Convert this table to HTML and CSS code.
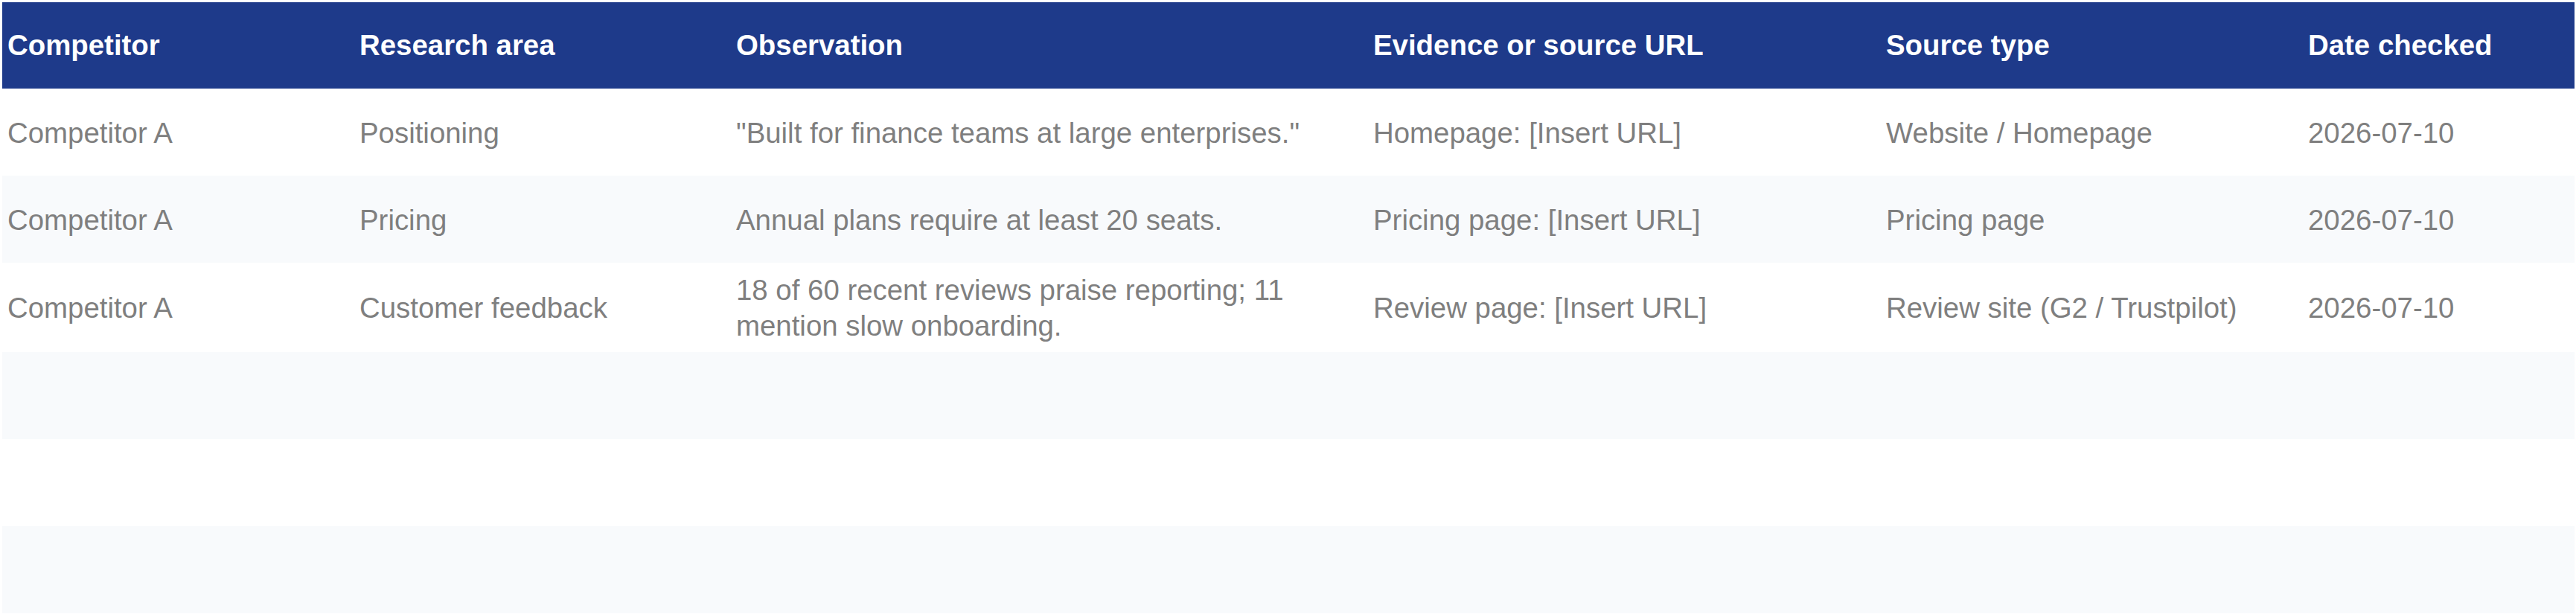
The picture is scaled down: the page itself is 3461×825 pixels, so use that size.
FILE: index.html
```html
<!DOCTYPE html>
<html lang="en">
<head>
<meta charset="utf-8">
<title>Competitor research log</title>
<link rel="stylesheet" href="styles.css">
</head>
<body>
<table class="log">
  <colgroup>
    <col class="c-competitor">
    <col class="c-area">
    <col class="c-obs">
    <col class="c-evidence">
    <col class="c-type">
    <col class="c-date">
  </colgroup>
  <thead>
    <tr class="head-row">
      <th>Competitor</th>
      <th>Research area</th>
      <th>Observation</th>
      <th>Evidence or source URL</th>
      <th>Source type</th>
      <th>Date checked</th>
    </tr>
  </thead>
  <tbody>
    <tr class="row">
      <td>Competitor A</td>
      <td>Positioning</td>
      <td>"Built for finance teams at large enterprises."</td>
      <td>Homepage: [Insert URL]</td>
      <td>Website / Homepage</td>
      <td>2026-07-10</td>
    </tr>
    <tr class="row">
      <td>Competitor A</td>
      <td>Pricing</td>
      <td>Annual plans require at least 20 seats.</td>
      <td>Pricing page: [Insert URL]</td>
      <td>Pricing page</td>
      <td>2026-07-10</td>
    </tr>
    <tr class="row">
      <td>Competitor A</td>
      <td>Customer feedback</td>
      <td>18 of 60 recent reviews praise reporting; 11 mention slow onboarding.</td>
      <td>Review page: [Insert URL]</td>
      <td>Review site (G2 / Trustpilot)</td>
      <td>2026-07-10</td>
    </tr>
    <tr class="row">
      <td></td><td></td><td></td><td></td><td></td><td></td>
    </tr>
    <tr class="row">
      <td></td><td></td><td></td><td></td><td></td><td></td>
    </tr>
    <tr class="row">
      <td></td><td></td><td></td><td></td><td></td><td></td>
    </tr>
  </tbody>
</table>
</body>
</html>
```

FILE: styles.css
```css
html, body {
  margin: 0;
  padding: 0;
  background: #ffffff;
}

body {
  padding: 3px;
  font-family: "Liberation Sans", Arial, sans-serif;
}

.log {
  width: 3456px;
  table-layout: fixed;
  border-collapse: collapse;
  border-spacing: 0;
  font-size: 38.4px;
  line-height: 48px;
}

.c-competitor { width: 473px; }
.c-area { width: 506px; }
.c-obs { width: 856px; }
.c-evidence { width: 689px; }
.c-type { width: 567px; }
.c-date { width: 365px; }

.head-row {
  height: 116px;
  background: #1e3a8a;
}

.head-row th {
  color: #ffffff;
  font-weight: 700;
  text-align: left;
  vertical-align: middle;
  padding: 12px 7px;
}

.row {
  height: 117px;
  background: #ffffff;
}

.row:nth-child(even) {
  background: #f8fafc;
}

.row td {
  color: #7f7f7f;
  font-weight: 400;
  text-align: left;
  vertical-align: middle;
  padding: 13px 7px 11px;
}
```
